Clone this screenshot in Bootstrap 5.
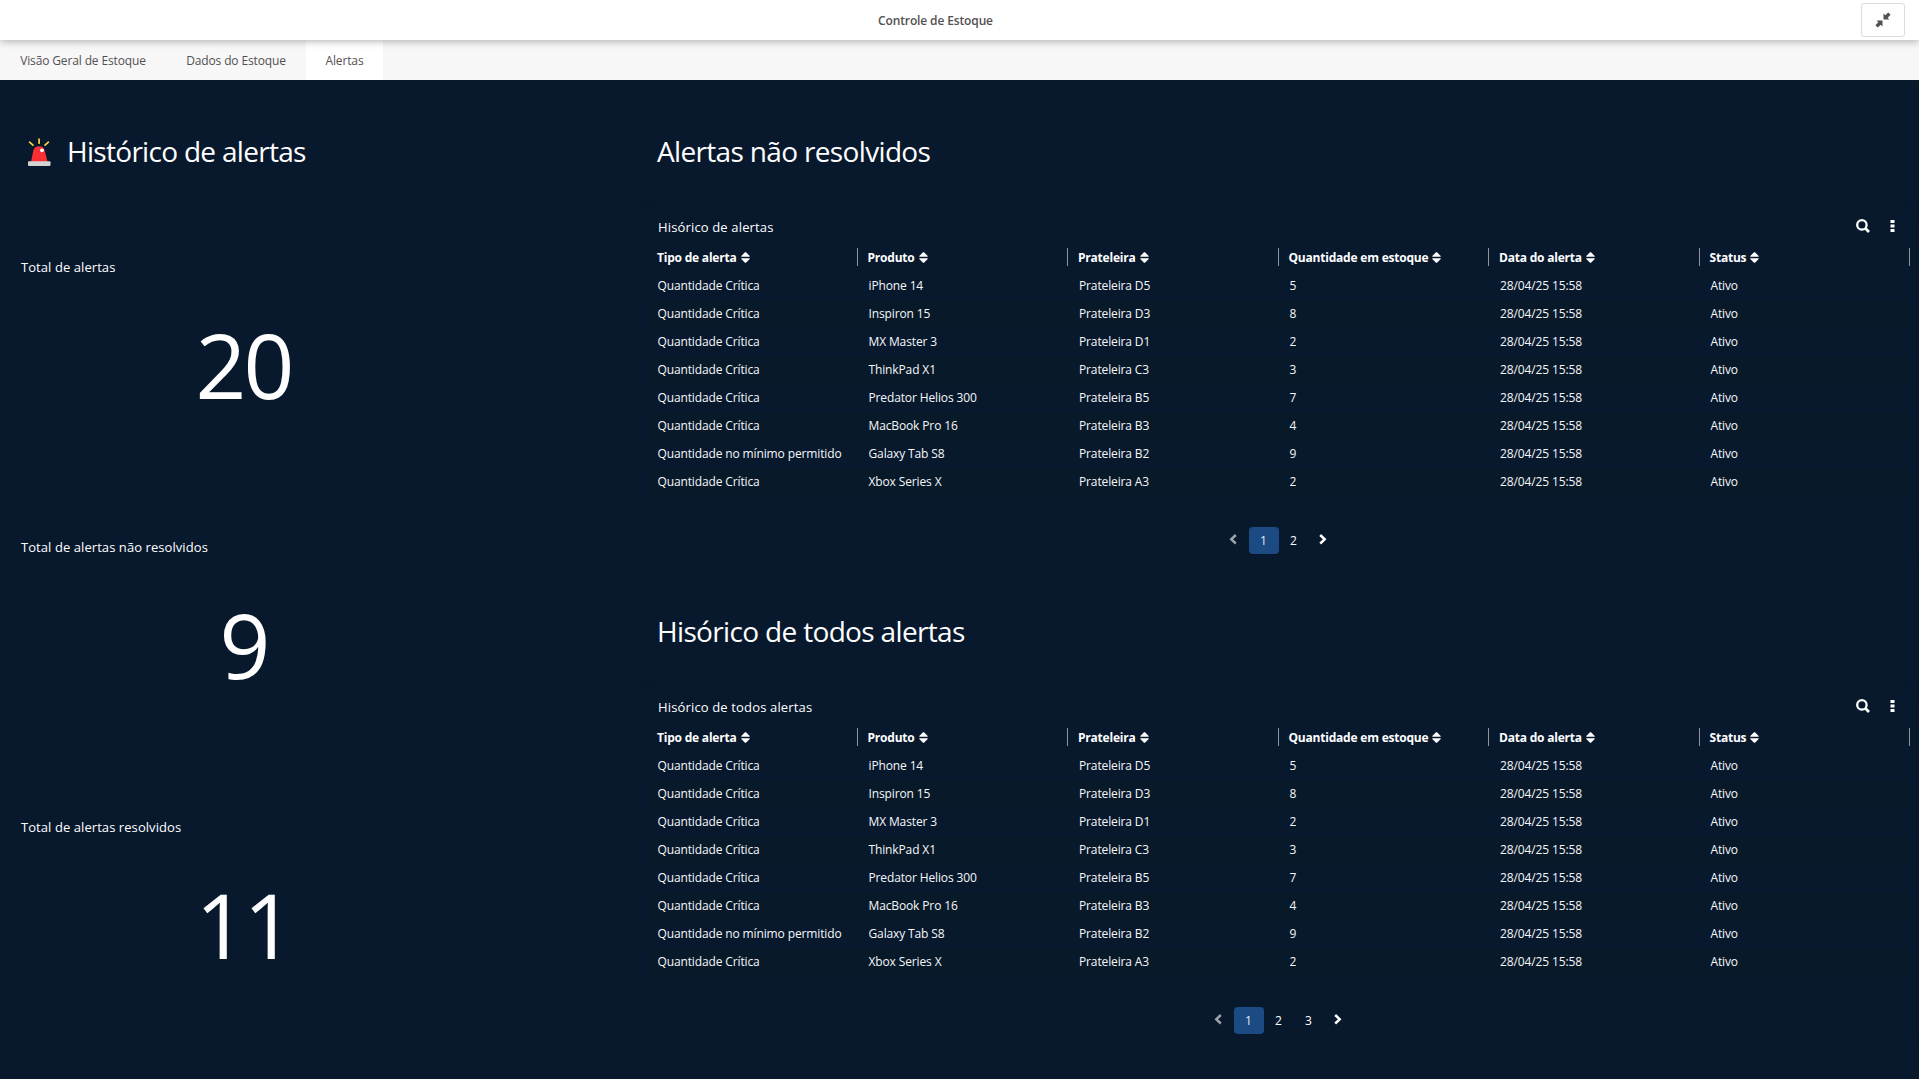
<!DOCTYPE html>
<html lang="pt-BR">
<head>
<meta charset="utf-8">
<meta name="viewport" content="width=device-width, initial-scale=1">
<title>Controle de Estoque</title>
<link href="https://cdn.jsdelivr.net/npm/bootstrap@5.3.0/dist/css/bootstrap.min.css" rel="stylesheet">
<style>
  body { font-family: "Segoe UI", "Open Sans", "Noto Sans", sans-serif; font-size: 12px; letter-spacing: -.13px; color: #fff; background: #08192e; overflow: hidden; height: 1079px; }
  .app-bar { height: 40px; color: #545052; box-shadow: 0 1px 8px rgba(0,0,0,.32); z-index: 2; }
  .app-title { line-height: 42px; font-weight: 600; width: 1871px; }
  .btn-shrink { top: 3px; right: 14px; width: 44px; height: 34px; border: 1px solid #dcdcdc; border-radius: 3px; background: #fff; }
  .sheet-tabs { height: 40px; background: #f7f7f7; }
  .sheet-tabs .nav-link { height: 40px; line-height: 42px; padding: 0; text-align: center; color: #545052; border-radius: 0; }
  .sheet-tabs .nav-link.active { background: #fff; color: #545052; }
  .tab-a { width: 166px; } .tab-b { width: 140px; } .tab-c { width: 77px; }
  .sheet { height: 999px; background: linear-gradient(#081a29, #08192e 10px); }
  .side { width: 647px; flex: none; }
  .main-col { width: 1263px; flex: none; }
  .heading { font-size: 28px; font-weight: 400; letter-spacing: -.66px; line-height: 40px; margin: 0; }
  .side .heading { padding: 51px 0 0 27px; height: 168px; gap: 16px; letter-spacing: -.7px; }
  .kpi { height: 280px; }
  .kpi-label { font-size: 13px; letter-spacing: .07px; line-height: 20px; padding: 9px 0 0 21px; margin: 0; }
  .kpi-value { font-size: 89px; letter-spacing: -3px; line-height: 110px; width: 487px; padding: 33px 0 0 0; text-align: center; }
  .block-top { height: 480px; }
  .main-col .heading { padding: 51px 0 0 10px; height: 130px; }
  .panel { height: 350px; box-shadow: 0 1px 8px 1px #081a29; background: #08192e; }
  .panel-bar { height: 33px; padding: 2px 15px 0 11px; border-bottom: 1px solid #09182a; font-size: 13px; letter-spacing: .15px; }
  .panel-name { padding-top: 2px; }
  .panel-tools { gap: 20px; margin-top: -3px; }
  .data-table { table-layout: fixed; width: 100%; margin: 0; border-collapse: collapse; }
  .data-table th { height: 29px; padding: 0 0 1px; font-weight: 700; letter-spacing: -.21px; }
  .th-in { height: 18px; line-height: 18px; padding: 1px 0 0 10px; border-right: 1px solid #8d949d; display: flex; align-items: center; gap: 4px; }
  .data-table td { height: 28px; line-height: 27px; padding: 0 0 1px 11px; font-weight: 500; color: #f6f7f9; }
  .data-table td:first-child { padding-left: 10.5px; }
  .data-table tr:nth-child(even) td { background: #081a2a; }
  .table-area { height: 277px; border-bottom: 1px solid #09182a; }
  .pager { height: 40px; letter-spacing: 0; }
  .pager a { width: 30px; height: 27px; line-height: 27px; text-align: center; color: #fff; text-decoration: none; border-radius: 4px; font-size: 12px; }
  .pager a.current { background: #1c4a82; color: #e6ebf2; }
  .pager svg { display: block; margin: 7px 0 0 10px; }
  .prev { opacity: .6; }
</style>
</head>
<body>
<header class="app-bar bg-white position-relative">
  <div class="app-title text-center">Controle de Estoque</div>
  <button class="btn-shrink position-absolute p-0 d-flex align-items-center justify-content-center" aria-label="Sair da tela cheia">
    <svg width="16" height="16" viewBox="0 0 16 16" fill="#545052"><path d="M8.500 1.500 10.300 3.300 13.200.4 15.600 2.800 12.700 5.700 14.300 7.500H8.500ZM7.500 14.500 5.700 12.700 2.800 15.600.4 13.200 3.300 10.300 1.500 8.500H7.500Z"/></svg>
  </button>
</header>
<nav class="nav sheet-tabs">
  <a class="nav-link tab-a" href="#">Visão Geral de Estoque</a>
  <a class="nav-link tab-b" href="#">Dados do Estoque</a>
  <a class="nav-link tab-c active" href="#">Alertas</a>
</nav>
<main class="sheet d-flex">
  <section class="side">
    <h1 class="heading d-flex align-items-start">
      <svg class="mt-1" width="24" height="32" viewBox="0 -2 24 32"><g stroke="#fcd53f" stroke-width="1.700" stroke-linecap="round"><path d="M12.100 2.200v4M2.600 5.200l3.400 3M21.400 5.200l-3.400 3"/></g><path d="M4 25 6.300 13.600Q7.400 9.200 12 9.200t5.700 4.400L20.600 25Z" fill="#f92f31"/><circle cx="15" cy="13.300" r="1.900" fill="#fff"/><rect x="1" y="24.300" width="22.500" height="4.700" rx="1" fill="#d3d3d3"/></svg>
      <span>Histórico de alertas</span>
    </h1>
    <div class="kpi"><p class="kpi-label">Total de alertas</p><div class="kpi-value">20</div></div>
    <div class="kpi"><p class="kpi-label">Total de alertas não resolvidos</p><div class="kpi-value">9</div></div>
    <div class="kpi"><p class="kpi-label">Total de alertas resolvidos</p><div class="kpi-value">11</div></div>
  </section>
  <div class="main-col">
    <section class="block-top">
      <h2 class="heading">Alertas não resolvidos</h2>
      <div class="panel" data-title="Hisórico de alertas" data-pages="2"></div>
    </section>
    <section>
      <h2 class="heading">Hisórico de todos alertas</h2>
      <div class="panel" data-title="Hisórico de todos alertas" data-pages="3"></div>
    </section>
  </div>
</main>
<script>
  const columns = ['Tipo de alerta', 'Produto', 'Prateleira', 'Quantidade em estoque', 'Data do alerta', 'Status'];
  const critical = 'Quantidade Crítica', date = '28/04/25 15:58';
  const alerts = [
    [critical, 'iPhone 14', 'Prateleira D5', 5],
    [critical, 'Inspiron 15', 'Prateleira D3', 8],
    [critical, 'MX Master 3', 'Prateleira D1', 2],
    [critical, 'ThinkPad X1', 'Prateleira C3', 3],
    [critical, 'Predator Helios 300', 'Prateleira B5', 7],
    [critical, 'MacBook Pro 16', 'Prateleira B3', 4],
    ['Quantidade no mínimo permitido', 'Galaxy Tab S8', 'Prateleira B2', 9],
    [critical, 'Xbox Series X', 'Prateleira A3', 2]
  ];
  const sortIcon = '<svg width="9" height="11" viewBox="0 0 9 11" fill="#fff"><path d="M4 .3h1L8.700 4v.8H.3V4ZM.3 6.200h8.400V7L5 10.700H4L.3 7Z"/></svg>';
  const searchIcon = '<svg width="14" height="14" viewBox="0 0 14 14" fill="none" stroke="#fff"><circle cx="5.900" cy="5.900" r="4.700" stroke-width="2.300"/><path d="M9.300 9.300 13 13" stroke-width="2.700"/></svg>';
  const menuIcon = '<svg width="5" height="12" viewBox="0 0 5 12" fill="#fff"><path d="M.5 0h4v3h-4zM.5 4.500h4v3h-4zM.5 9h4v3h-4z"/></svg>';
  const arrow = d => `<svg width="8" height="11" viewBox="0 0 8 11" fill="none" stroke="#fff" stroke-width="2.500"><path d="${d}"/></svg>`;
  document.querySelectorAll('.panel').forEach(panel => {
    const pages = Array.from({ length: +panel.dataset.pages }, (_, i) =>
      `<a href="#" class="${i ? '' : 'current'}">${i + 1}</a>`).join('');
    panel.innerHTML = `
      <div class="panel-bar d-flex align-items-center">
        <span class="panel-name me-auto">${panel.dataset.title}</span>
        <span class="panel-tools d-flex align-items-center">${searchIcon}${menuIcon}</span>
      </div>
      <div class="table-area"><table class="data-table">
        <thead><tr>${columns.map(c => `<th><div class="th-in">${c}${sortIcon}</div></th>`).join('')}</tr></thead>
        <tbody>${alerts.map(a => `<tr>${[...a, date, 'Ativo'].map(v => `<td>${v}</td>`).join('')}</tr>`).join('')}</tbody>
      </table></div>
      <nav class="pager d-flex align-items-center justify-content-center">
        <a href="#" class="prev">${arrow('M6.800 1 2.300 5.300l4.500 4.200')}</a>${pages}<a href="#">${arrow('M1.200 1l4.500 4.300-4.500 4.200')}</a>
      </nav>`;
  });
</script>
<script src="https://cdn.jsdelivr.net/npm/bootstrap@5.3.0/dist/js/bootstrap.bundle.min.js"></script>
</body>
</html>
